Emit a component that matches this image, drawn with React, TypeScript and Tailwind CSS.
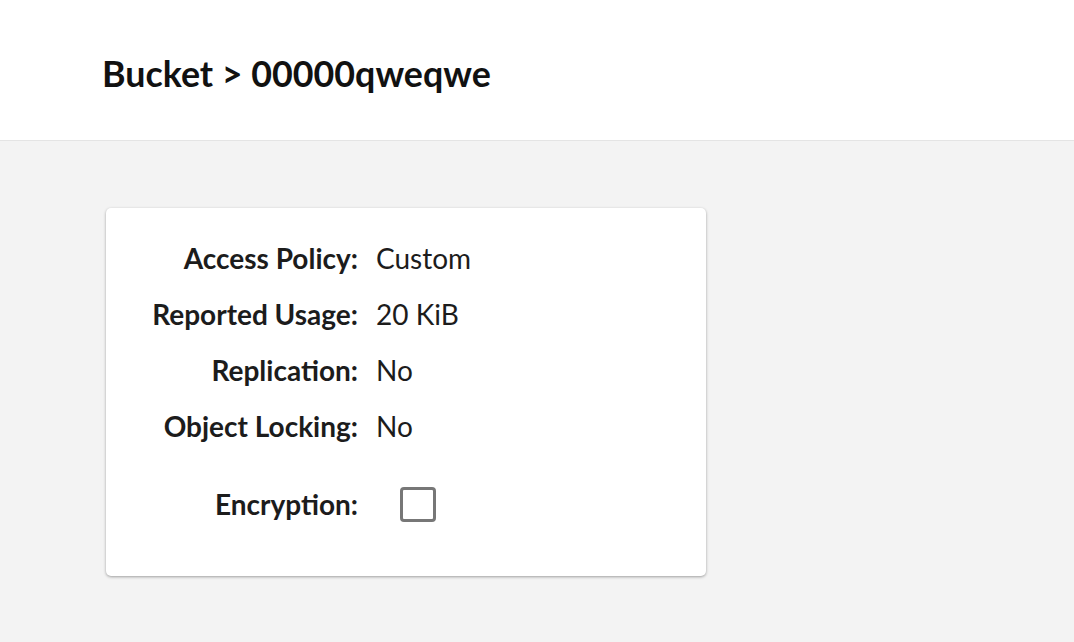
export default function App() {
  const rows = [
    { label: 'Access Policy:', value: 'Custom' },
    { label: 'Reported Usage:', value: '20 KiB' },
    { label: 'Replication:', value: 'No' },
    { label: 'Object Locking:', value: 'No' },
  ];

  return (
    <div className="min-h-screen bg-[#f3f3f3]" style={{ fontFamily: 'Lato, "Open Sans", sans-serif' }}>
      <header className="h-[141px] bg-white border-b border-[#e4e4e4] pl-[102px] pt-[52px]">
        <h1 className="text-[35.8px] leading-[44px] font-bold text-[#111]">Bucket &gt; 00000qweqwe</h1>
      </header>
      <main className="pl-[106px] pt-[67px]">
        <div className="w-[600px] h-[368px] rounded-[5px] bg-white shadow-[0_1px_3px_rgba(0,0,0,0.35)] pt-[22px]">
          {rows.map((r) => (
            <div key={r.label} className="flex items-center h-[56px] text-[28px] text-[#1c1c1c]">
              <div className="w-[252px] text-right font-bold">{r.label}</div>
              <div className="ml-[18px]">{r.value}</div>
            </div>
          ))}
          <div className="flex items-center h-[56px] mt-[22px] text-[28px] text-[#1c1c1c]">
            <div className="w-[252px] text-right font-bold">Encryption:</div>
            <div className="ml-[42px] w-[36px] h-[35px] rounded-[4px] border-[3px] border-[#777]"></div>
          </div>
        </div>
      </main>
    </div>
  );
}
